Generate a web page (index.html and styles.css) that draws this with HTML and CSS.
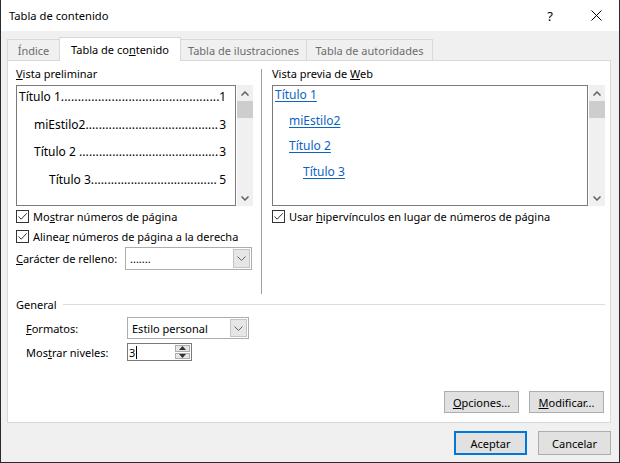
FILE: index.html
```html
<!DOCTYPE html>
<html lang="es">
<head>
<meta charset="utf-8">
<title>Tabla de contenido</title>
<link rel="stylesheet" href="styles.css">
</head>
<body>
<div class="window">
  <div class="titlebar">
    <div class="title">Tabla de contenido</div>
    <div class="tb-btn help">?</div>
    <div class="tb-btn close"><svg width="11" height="11" viewBox="0 0 11 11"><path d="M0.5 0.5L10.5 10.5M10.5 0.5L0.5 10.5" stroke="#000" stroke-width="1" fill="none"/></svg></div>
  </div>
  <div class="client">
    <div class="tabs">
      <div class="tab t1"><span>Índice</span></div>
      <div class="tab t2 active"><span>Tabla de co<u>n</u>tenido</span></div>
      <div class="tab t3"><span>Tabla de ilustraciones</span></div>
      <div class="tab t4"><span>Tabla de autoridades</span></div>
    </div>
    <div class="panel">
      <div class="top">
        <div class="col-left">
          <div class="lbl"><u>V</u>ista preliminar</div>
          <div class="pv">
            <div class="pv-box left-box">
              <div class="toc-row lvl1"><span class="nm">Título 1</span><span class="dots">...............................................</span><span class="pg">1</span></div>
              <div class="toc-row lvl2"><span class="nm">miEstilo2</span><span class="dots">........................................</span><span class="pg">3</span></div>
              <div class="toc-row lvl2"><span class="nm">Título 2 </span><span class="dots">..........................................</span><span class="pg">3</span></div>
              <div class="toc-row lvl3"><span class="nm">Título 3</span><span class="dots">......................................</span><span class="pg">5</span></div>
            </div>
            <div class="sb">
              <div class="sb-arrow"><svg width="8" height="5" viewBox="0 0 8 5"><path d="M0.5 4.5L4 1L7.5 4.5" stroke="#606060" stroke-width="1.5" fill="none"/></svg></div>
              <div class="sb-thumb"></div>
              <div class="sb-track"></div>
              <div class="sb-arrow"><svg width="8" height="5" viewBox="0 0 8 5"><path d="M0.5 0.5L4 4L7.5 0.5" stroke="#606060" stroke-width="1.5" fill="none"/></svg></div>
            </div>
          </div>
          <div class="cb"><span class="box"><svg width="11" height="11" viewBox="0 0 11 11"><path d="M1.5 5.5L4.2 8.2L9.7 2.3" stroke="#333" stroke-width="1" fill="none"/></svg></span><span class="cb-txt">Mo<u>s</u>trar números de página</span></div>
          <div class="cb"><span class="box"><svg width="11" height="11" viewBox="0 0 11 11"><path d="M1.5 5.5L4.2 8.2L9.7 2.3" stroke="#333" stroke-width="1" fill="none"/></svg></span><span class="cb-txt">Alinea<u>r</u> números de página a la derecha</span></div>
          <div class="fill-row">
            <div class="fill-lbl"><u>C</u>arácter de relleno:</div>
            <div class="combo fill-combo">
              <div class="combo-text"><span>.......</span></div>
              <div class="combo-btn"><svg width="9" height="5" viewBox="0 0 9 5"><path d="M0.5 0.5L4.5 4.5L8.5 0.5" stroke="#606060" stroke-width="1" fill="none"/></svg></div>
            </div>
          </div>
        </div>
        <div class="sep"></div>
        <div class="col-right">
          <div class="lbl">Vista previa de <u>W</u>eb</div>
          <div class="pv">
            <div class="pv-box right-box">
              <div class="web-row wl1"><span class="link">Título 1</span></div>
              <div class="web-row wl2"><span class="link">miEstilo2</span></div>
              <div class="web-row wl2"><span class="link">Título 2</span></div>
              <div class="web-row wl3"><span class="link">Título 3</span></div>
            </div>
            <div class="sb">
              <div class="sb-arrow"><svg width="8" height="5" viewBox="0 0 8 5"><path d="M0.5 4.5L4 1L7.5 4.5" stroke="#606060" stroke-width="1.5" fill="none"/></svg></div>
              <div class="sb-thumb"></div>
              <div class="sb-track"></div>
              <div class="sb-arrow"><svg width="8" height="5" viewBox="0 0 8 5"><path d="M0.5 0.5L4 4L7.5 0.5" stroke="#606060" stroke-width="1.5" fill="none"/></svg></div>
            </div>
          </div>
          <div class="cb"><span class="box"><svg width="11" height="11" viewBox="0 0 11 11"><path d="M1.5 5.5L4.2 8.2L9.7 2.3" stroke="#333" stroke-width="1" fill="none"/></svg></span><span class="cb-txt">Usar <u>h</u>ipervínculos en lugar de números de página</span></div>
        </div>
      </div>
      <div class="gen"><span>General</span><span class="gen-line"></span></div>
      <div class="frow fr-formatos">
        <div class="f-lbl"><u>F</u>ormatos:</div>
        <div class="combo fmt-combo">
          <div class="combo-text"><span>Estilo personal</span></div>
          <div class="combo-btn"><svg width="9" height="5" viewBox="0 0 9 5"><path d="M0.5 0.5L4.5 4.5L8.5 0.5" stroke="#606060" stroke-width="1" fill="none"/></svg></div>
        </div>
      </div>
      <div class="frow fr-niveles">
        <div class="f-lbl">Mos<u>t</u>rar niveles:</div>
        <div class="spin">
          <div class="spin-text"><span>3</span><span class="caret"></span></div>
          <div class="spin-btns">
            <div class="spin-btn"><svg width="7" height="4" viewBox="0 0 7 4"><path d="M0 4L3.5 0L7 4Z" fill="#333"/></svg></div>
            <div class="spin-btn"><svg width="7" height="4" viewBox="0 0 7 4"><path d="M0 0L3.5 4L7 0Z" fill="#333"/></svg></div>
          </div>
        </div>
      </div>
      <div class="btn-row">
        <div class="btn"><span><u>O</u>pciones...</span></div>
        <div class="btn"><span><u>M</u>odificar...</span></div>
      </div>
    </div>
    <div class="footer">
      <div class="btn big default"><span>Aceptar</span></div>
      <div class="btn big"><span>Cancelar</span></div>
    </div>
  </div>
</div>
</body>
</html>
```
FILE: styles.css
```css
html, body {
  margin: 0;
  padding: 0;
  background: #f0f0f0;
}
body {
  font-family: "Noto Sans", "Open Sans", sans-serif;
  font-size: 11px;
  color: #000;
}
u {
  text-decoration: underline;
  text-underline-offset: 1px;
}
.window {
  width: 620px;
  height: 463px;
  box-sizing: border-box;
  border: 1px solid #2b2b2b;
  border-top: none;
  background: #f0f0f0;
  display: flex;
  flex-direction: column;
}
.titlebar {
  height: 31px;
  background: #fff;
  display: flex;
  align-items: center;
  flex: none;
}
.title {
  flex: 1;
  padding-left: 8px;
  font-size: 11.2px;
}
.tb-btn {
  width: 46px;
  height: 31px;
  display: flex;
  align-items: center;
  justify-content: center;
}
.help {
  font-size: 13px;
}
.client {
  flex: 1;
  padding: 6px 8px 0 6px;
}
.tabs {
  display: flex;
  height: 23px;
  align-items: flex-end;
}
.tab {
  height: 21px;
  box-sizing: border-box;
  border: 1px solid #d9d9d9;
  border-bottom: none;
  background: #f0f0f0;
  color: #6d6d6d;
  display: flex;
  align-items: center;
  justify-content: center;
  margin-right: -1px;
  padding-top: 1px;
  white-space: nowrap;
}
.tab.active {
  height: 24px;
  background: #fff;
  color: #000;
  margin-bottom: -1px;
  position: relative;
  z-index: 1;
  padding-top: 0;
}
.t1 { width: 53px; }
.t2 { width: 122px; }
.t3 { width: 127px; }
.t4 { width: 127px; }
.panel {
  height: 363px;
  box-sizing: border-box;
  background: #fff;
  border: 1px solid #d9d9d9;
  padding: 6px 5px 0 8px;
  display: flex;
  flex-direction: column;
}
.top {
  display: flex;
  height: 228px;
  flex: none;
}
.col-left {
  width: 237px;
  display: flex;
  flex-direction: column;
}
.sep {
  width: 1px;
  height: 225px;
  background: #a0a0a0;
  margin: 2px 10px 0 8px;
}
.col-right {
  flex: 1;
  display: flex;
  flex-direction: column;
}
.lbl {
  height: 14px;
  line-height: 14px;
  margin-bottom: 4px;
}
.pv {
  display: flex;
  height: 121px;
  flex: none;
}
.pv-box {
  box-sizing: border-box;
  border: 1px solid #7a7a7a;
  background: #fff;
  overflow: hidden;
}
.left-box {
  width: 220px;
  padding: 0 9px 0 2px;
  font-size: 12px;
}
.right-box {
  flex: 1;
  padding: 0 0 0 2px;
  font-size: 12px;
}
.sb {
  width: 16px;
  margin-left: 1px;
  background: #f0f0f0;
  display: flex;
  flex-direction: column;
}
.sb-arrow {
  height: 16px;
  display: flex;
  align-items: center;
  justify-content: center;
}
.sb-thumb {
  height: 17px;
  background: #cdcdcd;
}
.sb-track {
  flex: 1;
}
.toc-row {
  display: flex;
  height: 22px;
  line-height: 22px;
  white-space: nowrap;
  margin-bottom: 5.67px;
}
.toc-row .nm { flex: none; white-space: pre; }
.toc-row .dots {
  flex: 1;
  min-width: 0;
  overflow: hidden;
  letter-spacing: 0.1px;
}
.lvl1 .dots { letter-spacing: 0.16px; }
.toc-row .pg { flex: none; }
.lvl2 { padding-left: 15px; }
.lvl3 { padding-left: 30px; }
.web-row {
  height: 18px;
  line-height: 18px;
  margin-bottom: 7.67px;
  white-space: nowrap;
}
.wl2 { padding-left: 14px; }
.wl3 { padding-left: 28px; }
.link {
  color: #0c63c4;
  text-decoration: underline;
  text-underline-offset: 2px;
}
.cb {
  height: 20px;
  display: flex;
  align-items: center;
  white-space: nowrap;
}
.box {
  width: 13px;
  height: 13px;
  box-sizing: border-box;
  border: 1px solid #333;
  background: #fff;
  margin-right: 4px;
  display: flex;
  flex: none;
}
.fill-row {
  margin-top: 1px;
  height: 23px;
  display: flex;
  align-items: center;
}
.fill-lbl {
  width: 109px;
  white-space: nowrap;
}
.combo {
  display: flex;
  box-sizing: border-box;
  border: 1px solid #adadad;
  background: #fff;
  height: 100%;
}
.fill-combo { width: 127px; }
.combo-text {
  flex: 1;
  padding-left: 4px;
  display: flex;
  align-items: center;
  white-space: nowrap;
}
.combo-btn {
  width: 17px;
  margin: 1px;
  box-sizing: border-box;
  background: #e6e6e6;
  border: 1px solid #c4c4c4;
  display: flex;
  align-items: center;
  justify-content: center;
}
.gen {
  display: flex;
  align-items: center;
  height: 14px;
  margin-top: 2px;
  flex: none;
}
.gen-line {
  flex: 1;
  height: 1px;
  background: #dcdcdc;
  margin-left: 6px;
}
.frow {
  display: flex;
  align-items: center;
  padding-left: 10px;
  flex: none;
}
.f-lbl {
  width: 101px;
  white-space: nowrap;
}
.fr-formatos {
  margin-top: 6px;
  height: 22px;
}
.fmt-combo { width: 122px; }
.fr-niveles {
  margin-top: 4px;
  height: 18px;
}
.spin {
  width: 65px;
  height: 18px;
  box-sizing: border-box;
  border: 1px solid #7a7a7a;
  background: #fff;
  display: flex;
}
.spin-text {
  flex: 1;
  padding-left: 1px;
  display: flex;
  align-items: center;
}
.caret {
  width: 1px;
  height: 13px;
  background: #000;
  margin-left: 1px;
}
.spin-btns {
  width: 15px;
  margin: 1px;
  display: flex;
  flex-direction: column;
  gap: 1px;
}
.spin-btn {
  flex: 1;
  box-sizing: border-box;
  background: #e6e6e6;
  border: 1px solid #adadad;
  display: flex;
  align-items: center;
  justify-content: center;
}
.btn-row {
  display: flex;
  justify-content: flex-end;
  gap: 10px;
  margin-top: 30px;
  padding-right: 1px;
  flex: none;
}
.btn {
  width: 75px;
  height: 22px;
  box-sizing: border-box;
  border: 1px solid #adadad;
  background: #e1e1e1;
  display: flex;
  align-items: center;
  justify-content: center;
  white-space: nowrap;
}
.footer {
  display: flex;
  justify-content: flex-end;
  gap: 11px;
  margin-top: 8px;
}
.btn.big {
  width: 73px;
  height: 24px;
}
.btn.default {
  border: 2px solid #0078d7;
}
```
